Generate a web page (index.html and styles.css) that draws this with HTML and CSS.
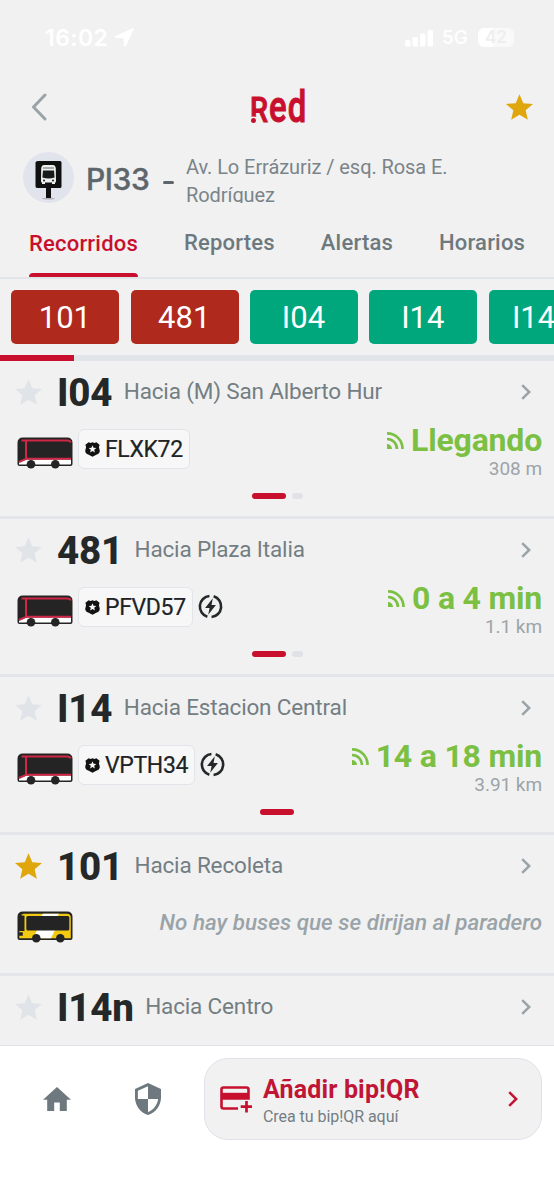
FILE: index.html
```html
<!DOCTYPE html>
<html lang="es">
<head>
<meta charset="utf-8">
<title>Red - Paradero PI33</title>
<link rel="stylesheet" href="styles.css">
</head>
<body>
<svg class="defs" aria-hidden="true">
  <symbol id="star" viewBox="2 2 20 19"><path d="M12 17.27 18.18 21l-1.64-7.03L22 9.24l-7.19-.61L12 2 9.19 8.63 2 9.24l5.46 4.73L5.82 21z"/></symbol>
  <symbol id="next" viewBox="0 0 10 16"><path d="M1.2 1.2 8.2 8l-7 6.8" fill="none" stroke="currentColor" stroke-width="2.5"/></symbol>
  <symbol id="live" viewBox="0 0 17 17"><path d="M0 1.400A15.300 15.300 0 0 1 15.500 17M0 7A9.800 9.800 0 0 1 9.900 17" fill="none" stroke="currentColor" stroke-width="2.700"/><path d="M0 12a5 5 0 0 1 5 5H0z" fill="currentColor"/></symbol>
  <symbol id="police" viewBox="0 0 14 14"><path d="M3.400.2 5.200 1 7 .2 8.800 1l1.800-.8L13.600 2.600 13 5l.8 3.200q0 2.600-2.800 3.500L7 13.800l-4-2.100Q.2 10.800.2 8.200L1 5 .4 2.600z" fill="#121212"/><path d="m7 3 1 2.400 2.600.2-2 1.700.6 2.500L7 8.500 4.800 9.800l.6-2.500-2-1.700L6 5.400z" fill="#f7f7f8"/></symbol>
  <symbol id="bolt" viewBox="0 0 24 24"><path d="M11 1.900A10.200 10.200 0 0 0 9 21.800M13 22.100A10.200 10.200 0 0 0 15 2.200" fill="none" stroke="#252829" stroke-width="2.500"/><path d="M14.200 4 6.800 13.500h4.300L9.800 20l7.400-9.500h-4.200z" fill="#252829"/></symbol>
  <symbol id="bus" viewBox="0 0 56 32">
    <path d="M6 .5h44q5.500 0 5.500 5.500v21q0 2-2 2h-51Q.5 29 .5 27V6Q.5.500 6 .5z" fill="#242425"/>
    <path d="M2 25.500 9.500 22.500H54v4.200q0 .8-.8.8H2z" fill="#fff"/>
    <path d="M4.500 3.500h46q2.500 0 3.200 2M9 3.500V21.500M2 25l7.500-3.300H54" fill="none" stroke="#cf2745" stroke-width="2"/>
    <circle cx="14" cy="27.200" r="4.300" fill="#242425"/><circle cx="38.300" cy="27.200" r="4.300" fill="#242425"/>
  </symbol>
  <symbol id="bus-yellow" viewBox="0 0 56 32">
    <path d="M6 .5h44q5.500 0 5.500 5.500v21q0 2-2 2h-51Q.5 29 .5 27V6Q.5.500 6 .5z" fill="#242425"/>
    <path d="M4 4.200Q4.500 2.700 7 2.700h43q3.800 0 3.800 3.800v20.700H2.300v-2.400h3.500v-3.600H2.300V20h5.200V4.800z" fill="#f2ca12"/>
    <path d="M26 2.700h16L40 5.500H24zM20 19h18l-4 8.200H16.500z" fill="#fff"/>
    <rect x="9.300" y="5" width="43" height="14.500" rx="1.500" fill="#242425"/>
    <circle cx="19.300" cy="27.200" r="4.300" fill="#242425"/><circle cx="43.300" cy="27.200" r="4.300" fill="#242425"/>
  </symbol>
</svg>
<div class="screen">
  <div class="status">
    <span class="time">16:02</span>
    <svg class="location" viewBox="0 0 19 19"><path d="M18.500.4.5 8.500q-.8.6.2.9l8.300.5.4 8.300q.3 1 .9.100z" fill="#fff" stroke="#fff"/></svg>
    <svg class="signal" viewBox="0 0 28 18"><g fill="#fff"><rect y="11" width="5.500" height="6.500" rx="1.500"/><rect x="7.500" y="8" width="5.500" height="9.500" rx="1.500"/><rect x="15" y="4.500" width="5.500" height="13" rx="1.500"/><rect x="22.500" y="1" width="5.500" height="16.500" rx="1.500"/></g></svg>
    <span class="network">5G</span>
    <span class="battery">42</span>
  </div>
  <header class="header">
    <svg class="back" viewBox="0 0 16 28"><path d="M14 2 2.500 14 14 26" fill="none" stroke="#9aa3a8" stroke-width="3" stroke-linecap="round" stroke-linejoin="round"/></svg>
    <div class="logo"><span class="logo-cap">R</span><span class="logo-low">ed</span></div>
    <svg class="star gold"><use href="#star"/></svg>
  </header>
  <section class="stop">
    <svg class="stop-icon" viewBox="0 0 51 51"><circle cx="25.500" cy="25.500" r="25.500" fill="#e1e4ec"/><ellipse cx="25.500" cy="46.600" rx="6.500" ry="1" fill="#b0b3b8"/><path d="M15 9h22q1.500 0 1.500 1.500v24Q38.500 36 37 36h-9v10h-5V36h-8q-2.500 0-2.500-1.500v-24Q12.500 9 15 9z" fill="#101010"/><path d="M21 13h9q2.500.4 2.800 3.500L33 29q0 1.500-1 1.500v1.500h-3v-1.500h-7V32h-3v-1.500q-1 0-1-1.500l.200-12.500Q18.500 13.400 21 13z" fill="#eee"/><path d="M20 18.500h11l.6 7q-6 2-12.200 0z" fill="#17191a"/><path d="M20 15h11v2H20z" fill="#aaa"/><circle cx="21" cy="28.500" r="1" fill="#17191a"/><circle cx="30" cy="28.500" r="1" fill="#17191a"/></svg>
    <span class="stop-code">PI33</span><span class="stop-dash"></span>
    <p class="address">Av. Lo Errázuriz / esq. Rosa E. Rodríguez</p>
  </section>
  <nav class="tabs"><span class="tab active">Recorridos</span><span class="tab">Reportes</span><span class="tab">Alertas</span><span class="tab">Horarios</span></nav>
  <div class="chips"><span class="chip red">101</span><span class="chip red">481</span><span class="chip">I04</span><span class="chip">I14</span><span class="chip last">I14n</span></div>
  <div class="track"><div class="thumb"></div></div>
  <main class="routes">
    <article class="route">
      <div class="title"><svg class="star"><use href="#star"/></svg><b>I04</b><span class="dest">Hacia (M) San Alberto Hur</span><svg class="next"><use href="#next"/></svg></div>
      <div class="arrival"><svg class="bus"><use href="#bus"/></svg><span class="plate"><svg class="police"><use href="#police"/></svg>FLXK72</span>
        <div class="eta"><div class="when"><svg class="live"><use href="#live"/></svg>Llegando</div><div class="distance">308 m</div></div></div>
      <div class="pager"><i class="on"></i><i></i></div>
    </article>
    <article class="route">
      <div class="title"><svg class="star"><use href="#star"/></svg><b>481</b><span class="dest">Hacia Plaza Italia</span><svg class="next"><use href="#next"/></svg></div>
      <div class="arrival"><svg class="bus"><use href="#bus"/></svg><span class="plate"><svg class="police"><use href="#police"/></svg>PFVD57</span><svg class="bolt"><use href="#bolt"/></svg>
        <div class="eta"><div class="when"><svg class="live"><use href="#live"/></svg>0 a 4 min</div><div class="distance">1.1 km</div></div></div>
      <div class="pager"><i class="on"></i><i></i></div>
    </article>
    <article class="route">
      <div class="title"><svg class="star"><use href="#star"/></svg><b>I14</b><span class="dest">Hacia Estacion Central</span><svg class="next"><use href="#next"/></svg></div>
      <div class="arrival"><svg class="bus"><use href="#bus"/></svg><span class="plate"><svg class="police"><use href="#police"/></svg>VPTH34</span><svg class="bolt"><use href="#bolt"/></svg>
        <div class="eta"><div class="when"><svg class="live"><use href="#live"/></svg>14 a 18 min</div><div class="distance">3.91 km</div></div></div>
      <div class="pager"><i class="on"></i></div>
    </article>
    <article class="route empty">
      <div class="title"><svg class="star gold"><use href="#star"/></svg><b>101</b><span class="dest">Hacia Recoleta</span><svg class="next"><use href="#next"/></svg></div>
      <div class="arrival"><svg class="bus"><use href="#bus-yellow"/></svg><em class="none">No hay buses que se dirijan al paradero</em></div>
    </article>
    <article class="route final">
      <div class="title"><svg class="star"><use href="#star"/></svg><b>I14n</b><span class="dest">Hacia Centro</span><svg class="next"><use href="#next"/></svg></div>
    </article>
  </main>
  <footer class="bottom">
    <svg class="home" viewBox="2 3 20 17"><path d="M10 20v-6h4v6h5v-8h3L12 3 2 12h3v8z" fill="#6d797e"/></svg>
    <svg class="shield" viewBox="3 1 18 22"><path d="M12 1 3 5v6c0 5.550 3.840 10.740 9 12 5.160-1.260 9-6.450 9-12V5zm0 10.990h7c-.53 4.120-3.280 7.790-7 8.940V12H5V6.300l7-3.110z" fill="#6d797e"/></svg>
    <div class="qr">
      <svg class="card" viewBox="0 0 32 27"><path d="M18 22.500H3.500q-2 0-2-2v-17q0-2 2-2h23q2 0 2 2v9h-27" fill="none" stroke="#c8102e" stroke-width="2.600"/><path d="M1.500 6.800h27v5.500h-27z" fill="#c8102e"/><path d="M26.500 15v11.500M20.700 20.700H32" stroke="#c8102e" stroke-width="2.700"/></svg>
      <div class="qr-text"><strong>Añadir bip!QR</strong><span>Crea tu bip!QR aquí</span></div>
      <svg class="next"><use href="#next"/></svg>
    </div>
  </footer>
</div>
</body>
</html>
```
FILE: styles.css
```css
* { box-sizing: border-box; }
body { margin: 0; background: #f1f1f1; font-family: Roboto, "Liberation Sans", sans-serif; overflow: hidden; }
svg { display: block; flex: none; }
.defs { position: absolute; width: 0; height: 0; }
.screen { width: 554px; height: 1200px; overflow: hidden; display: flex; flex-direction: column; }
.screen > * { flex: none; }
.status { height: 75px; display: flex; align-items: center; padding-left: 45px; color: #fff; font-family: Inter, sans-serif; }
.time { font-size: 23px; font-weight: 600; width: 70px; letter-spacing: .4px; }
.location { width: 19px; height: 19px; }
.signal { width: 28px; height: 18px; margin-left: 271px; }
.network { font-size: 19px; font-weight: 500; margin-left: 9px; width: 36px; }
.battery { width: 36px; height: 19px; border-radius: 6px; background: linear-gradient(90deg, #fff 42%, #f9f9f9 42%); color: #eee; font-size: 17px; line-height: 19px; font-weight: 600; text-align: center; }
.header { height: 63px; display: flex; align-items: center; padding: 0 21px 0 31px; justify-content: space-between; }
.back { width: 16px; height: 28px; }
.logo { position: relative; width: 56px; height: 44px; margin-left: 5px; display: flex; align-items: baseline; color: #c8102e; font-weight: 500; line-height: 44px; -webkit-text-stroke: 1px #c8102e; }
.logo-cap { width: 17px; font-size: 35px; transform: scaleX(.82); transform-origin: 0 0; margin-left: -1px; }
.logo-low { width: 38px; margin-left: 2px; font-size: 45px; transform: scaleX(.73); transform-origin: 0 0; letter-spacing: 1.500px; }
.logo::after { content: ""; position: absolute; left: 0; top: 33px; width: 5px; height: 5px; border-radius: 50%; background: #c8102e; box-shadow: 0 0 0 1.500px #f1f1f1; }
.star { width: 27px; height: 26px; fill: #e0e3e8; }
.gold { fill: #dfa60d; }
.stop { height: 66px; padding: 14px 0 0 23px; display: flex; }
.stop-icon { width: 51px; height: 51px; }
.stop-code { margin-left: 12px; width: 77px; font: 500 30px/55px Inter, sans-serif; color: #5d666b; letter-spacing: -.4px; -webkit-text-stroke: .4px #5d666b; }
.stop-dash { width: 11px; height: 3px; margin-top: 29px; border-radius: 2px; background: #5d666b; }
.address { margin: 0 0 0 12px; width: 290px; height: 51px; overflow: hidden; padding-top: 1px; font-size: 20px; line-height: 28px; color: #7a8489; letter-spacing: -.07px; }
.tabs { height: 75px; border-bottom: 2px solid #e1e5e9; display: flex; padding-left: 29px; color: #6d797e; font-size: 22px; font-weight: 500; line-height: 26px; letter-spacing: .2px; }
.tab { padding-top: 26px; margin-right: 46px; height: 73px; white-space: nowrap; }
.tab.active { color: #c8102e; padding-top: 27px; position: relative; }
.active::after { content: ""; position: absolute; left: 0; right: 0; bottom: 0; height: 4px; border-radius: 4px 4px 0 0; background: #c8102e; }
.chips { height: 76px; padding: 11px 0 0 11.400px; display: flex; gap: 11.300px; width: 554px; overflow: hidden; }
.chip { flex: none; width: 108px; height: 54px; border-radius: 5px; background: #00a77d; color: #fff; text-align: center; font-size: 31px; line-height: 56px; padding-right: 1px; }
.chip.red { background: #af291d; }
.track { height: 6px; background: #e1e5e9; }
.thumb { width: 74px; height: 6px; background: #c8102e; }
.routes { height: 684px; overflow: hidden; }
.route { height: 158px; border-bottom: 3px solid #e3e5ea; padding: 0 12px 0 15px; }
.title { height: 62px; padding-bottom: 1px; display: flex; align-items: center; }
.title b { font-size: 38.500px; font-weight: 800; color: #252829; margin-left: 15px; letter-spacing: -.2px; padding-top: 1px; }
.dest { margin-left: 11.500px; padding-bottom: 1px; font-size: 22.500px; color: #737e83; letter-spacing: -.16px; white-space: nowrap; }
.next { width: 10px; height: 16px; color: #9aa3a8; }
.title .next { margin-left: auto; margin-right: 11px; }
.arrival { height: 64px; display: flex; align-items: flex-start; padding-left: 2px; }
.bus { width: 56px; height: 32px; margin-top: 14px; }
.plate { height: 40px; margin: 6px 0 0 5px; border: 1.500px solid #e1e4e9; border-radius: 6px; background: #f7f7f8; padding: 0 6px; display: flex; align-items: center; gap: 5px; color: #202224; font-size: 23px; letter-spacing: -.35px; -webkit-text-stroke: .2px #202224; }
.police { width: 15px; height: 15px; }
.bolt { width: 25px; height: 25px; margin: 13px 0 0 5px; }
.eta { margin-left: auto; text-align: right; }
.when { height: 35px; display: flex; justify-content: flex-end; color: #7bc043; font-size: 32px; line-height: 34px; font-weight: 700; white-space: nowrap; letter-spacing: -.2px; }
.live { width: 17px; height: 17px; margin: 9px 7px 0 0; }
.distance { font-size: 19px; line-height: 22px; color: #9ca4a9; letter-spacing: -.05px; }
.pager { height: 6px; margin-top: 6px; margin-left: -3px; display: flex; justify-content: center; gap: 6px; }
.pager i { width: 11px; height: 6px; border-radius: 3px; background: #e0e2e8; }
.pager .on { width: 34px; background: #c8102e; }
.empty { height: 141px; }
.none { margin: 11px 0 0 auto; font-size: 22.450px; line-height: 28px; font-weight: 500; color: #9aa3a8; white-space: nowrap; }
.final { border: 0; }
.bottom { height: 155px; border-top: 1px solid #dde0e5; background: #fff; display: flex; padding: 12px 0 0 43px; }
.home { width: 28px; height: 24px; margin-top: 29px; }
.shield { width: 26px; height: 32px; margin: 25px 0 0 64px; }
.qr { margin-left: 43px; width: 338px; height: 82px; border: 1.500px solid #dfe2eb; border-radius: 24px; background: #f1f1f2; display: flex; align-items: center; padding: 0 23px 0 15px; }
.card { width: 32px; height: 27px; }
.qr-text { margin-left: 11px; padding-top: 6px; display: flex; flex-direction: column; }
.qr strong { color: #c01535; font-size: 25px; line-height: 30px; letter-spacing: .15px; }
.qr-text span { font-size: 16px; line-height: 24px; color: #737e83; letter-spacing: -.05px; }
.qr .next { margin-left: auto; color: #c01535; }
```
